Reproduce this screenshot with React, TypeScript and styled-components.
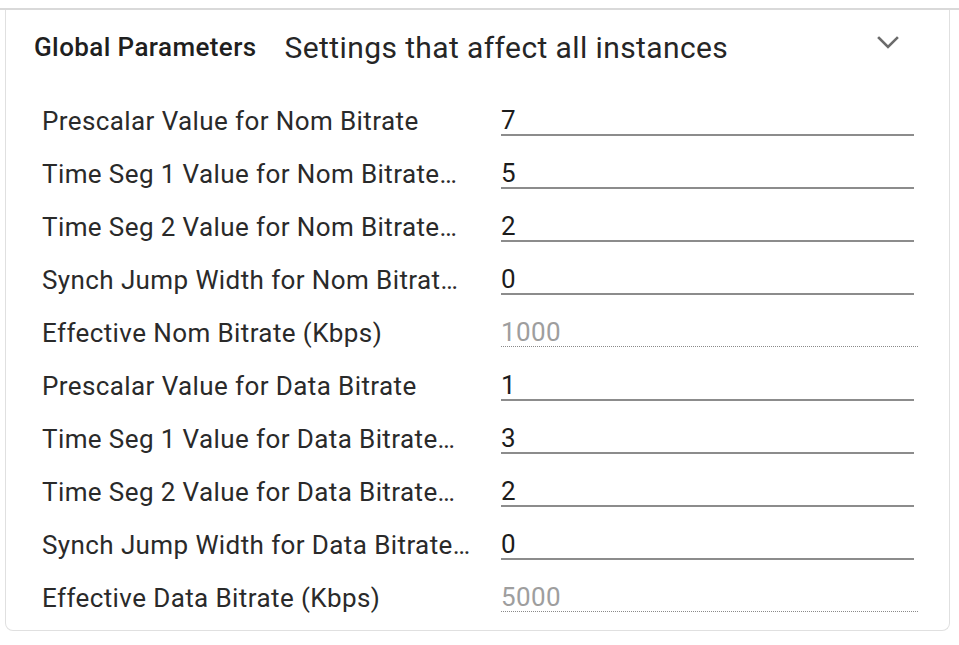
import React from "react";
import styled, { createGlobalStyle } from "styled-components";

const GlobalStyle = createGlobalStyle`
  html, body { margin: 0; padding: 0; background: #ffffff; }
  body { font-family: Roboto, "Liberation Sans", Arial, sans-serif; color: #212121; }
`;

const Page = styled.div`
  padding-top: 8px;
`;

const TopRule = styled.div`
  height: 2px;
  background: #d9d9d9;
`;

const Card = styled.section`
  margin: 0 9px 0 5px;
  border: 1.5px solid #e0e0e0;
  border-top: none;
  border-radius: 0 0 8px 8px;
  background: #fff;
`;

const Header = styled.div`
  display: flex;
  align-items: center;
  height: 74px;
  padding: 0 49px 0 28px;
`;

const Title = styled.span`
  font-size: 26px;
  font-weight: 500;
  letter-spacing: 0.4px;
  color: #1f1f1f;
  margin-right: 28px;
`;

const Subtitle = styled.span`
  font-size: 30px;
  font-weight: 400;
  letter-spacing: 0.4px;
  color: #262626;
  flex: 1;
`;

const Chevron = styled.svg`
  align-self: flex-start;
  width: 24px;
  height: 24px;
  margin-top: 20px;
  color: #6b6b6b;
`;

const Body = styled.div`
  padding: 10px 35px 6px 36px;
`;

const Row = styled.div`
  display: grid;
  grid-template-columns: 430px 1fr;
  column-gap: 29px;
  align-items: center;
  height: 53px;
`;

const Label = styled.div`
  font-size: 26px;
  letter-spacing: 0.4px;
  color: #2a2a2a;
  white-space: nowrap;
  overflow: hidden;
  text-overflow: ellipsis;
`;

const Field = styled.div<{ $disabled?: boolean }>`
  font-size: 26px;
  letter-spacing: 0.4px;
  line-height: 28px;
  color: ${(p) => (p.$disabled ? "#9e9e9e" : "#1c1c1c")};
  border-bottom: ${(p) => (p.$disabled ? "1.5px dotted #8a8a8a" : "2px solid #8c8c8c")};
  margin-right: ${(p) => (p.$disabled ? "-4px" : "0")};
`;

const rows: { label: string; value: string; disabled?: boolean }[] = [
  { label: "Prescalar Value for Nom Bitrate", value: "7" },
  { label: "Time Seg 1 Value for Nom Bitrate\u2026", value: "5" },
  { label: "Time Seg 2 Value for Nom Bitrate\u2026", value: "2" },
  { label: "Synch Jump Width for Nom Bitrat\u2026", value: "0" },
  { label: "Effective Nom Bitrate (Kbps)", value: "1000", disabled: true },
  { label: "Prescalar Value for Data Bitrate", value: "1" },
  { label: "Time Seg 1 Value for Data Bitrate\u2026", value: "3" },
  { label: "Time Seg 2 Value for Data Bitrate\u2026", value: "2" },
  { label: "Synch Jump Width for Data Bitrate\u2026", value: "0" },
  { label: "Effective Data Bitrate (Kbps)", value: "5000", disabled: true },
];

export default function App() {
  return (
    <Page>
      <GlobalStyle />
      <TopRule />
      <Card>
        <Header>
          <Title>Global Parameters</Title>
          <Subtitle>Settings that affect all instances</Subtitle>
          <Chevron viewBox="0 0 24 24" fill="none" stroke="currentColor" strokeWidth="2.6" strokeLinecap="square">
            <polyline points="3,8 12,17 21,8" />
          </Chevron>
        </Header>
        <Body>
          {rows.map((r) => (
            <Row key={r.label}>
              <Label>{r.label}</Label>
              <Field $disabled={r.disabled}>{r.value}</Field>
            </Row>
          ))}
        </Body>
      </Card>
    </Page>
  );
}
